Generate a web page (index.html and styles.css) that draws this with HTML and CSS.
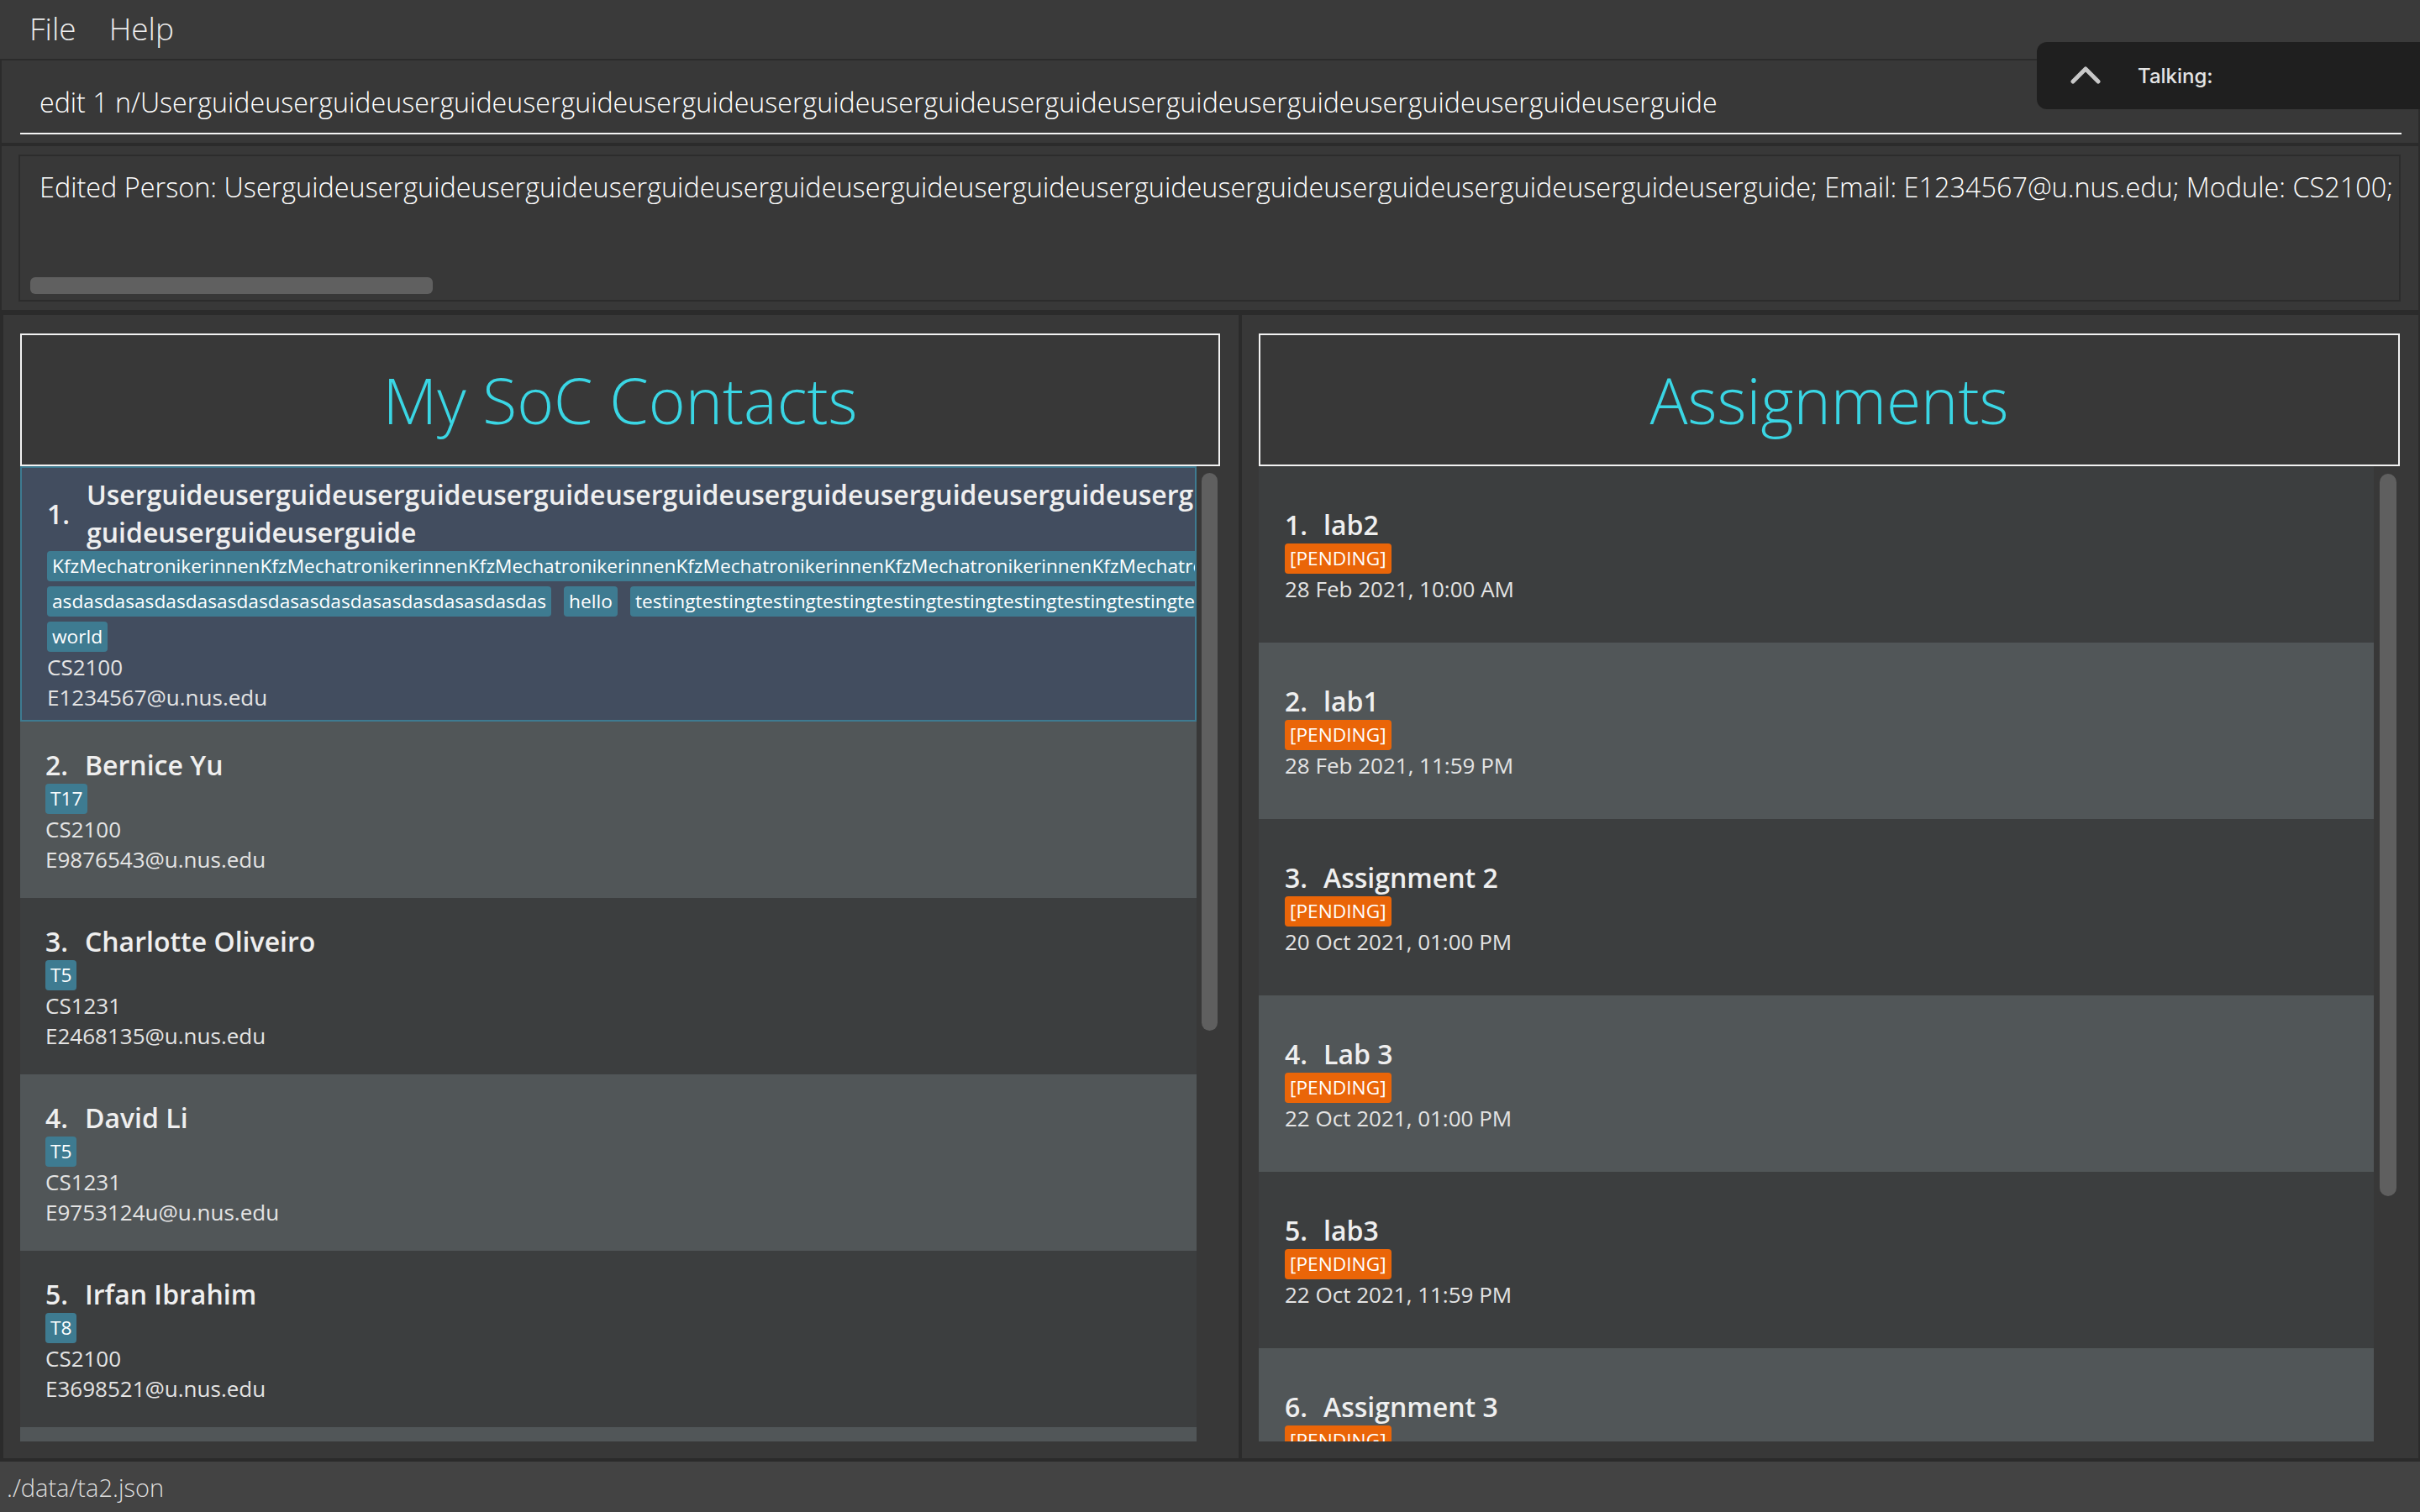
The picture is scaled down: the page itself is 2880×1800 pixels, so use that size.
FILE: index.html
```html
<!DOCTYPE html>
<html lang="en">
<head>
<meta charset="utf-8">
<title>TA2</title>
<link rel="stylesheet" href="styles.css">
</head>
<body>
<div class="app">
  <div class="menubar">
    <span class="menu-item">File</span>
    <span class="menu-item">Help</span>
  </div>

  <div class="command-panel">
    <div class="command-field">edit 1 n/Userguideuserguideuserguideuserguideuserguideuserguideuserguideuserguideuserguideuserguideuserguideuserguideuserguide</div>
  </div>

  <div class="result-panel">
    <div class="result-box">
      <div class="result-text">Edited Person: Userguideuserguideuserguideuserguideuserguideuserguideuserguideuserguideuserguideuserguideuserguideuserguideuserguide; Email: E1234567@u.nus.edu; Module: CS2100; Tags: [KfzMechatronikerinnen][hello][world]</div>
      <div class="hscroll"><div class="hthumb"></div></div>
    </div>
  </div>

  <div class="main">
    <section class="panel panel-left">
      <div class="title-box"><h1 class="title">My SoC Contacts</h1></div>
      <div class="list-wrap">
        <div class="list">
          <div class="card even selected">
            <div class="name-row">
              <span class="index">1.</span>
              <div class="name">
                <span class="name-line">Userguideuserguideuserguideuserguideuserguideuserguideuserguideuserguideuserguideuserguideuser</span>
                <span class="name-line">guideuserguideuserguide</span>
              </div>
            </div>
            <div class="tags">
              <div class="tag-row"><span class="tag">KfzMechatronikerinnenKfzMechatronikerinnenKfzMechatronikerinnenKfzMechatronikerinnenKfzMechatronikerinnenKfzMechatronikerinnenKfzMechatronikerinnen</span></div>
              <div class="tag-row"><span class="tag">asdasdasasdasdasasdasdasasdasdasasdasdasasdasdas</span><span class="tag">hello</span><span class="tag">testingtestingtestingtestingtestingtestingtestingtestingtestingtestingtestingtesting</span></div>
              <div class="tag-row"><span class="tag">world</span></div>
            </div>
            <div class="detail">CS2100</div>
            <div class="detail">E1234567@u.nus.edu</div>
          </div>

          <div class="card odd">
            <div class="name-row"><span class="index">2.</span><div class="name"><span class="name-line">Bernice Yu</span></div></div>
            <div class="tags"><div class="tag-row"><span class="tag">T17</span></div></div>
            <div class="detail">CS2100</div>
            <div class="detail">E9876543@u.nus.edu</div>
          </div>

          <div class="card even">
            <div class="name-row"><span class="index">3.</span><div class="name"><span class="name-line">Charlotte Oliveiro</span></div></div>
            <div class="tags"><div class="tag-row"><span class="tag">T5</span></div></div>
            <div class="detail">CS1231</div>
            <div class="detail">E2468135@u.nus.edu</div>
          </div>

          <div class="card odd">
            <div class="name-row"><span class="index">4.</span><div class="name"><span class="name-line">David Li</span></div></div>
            <div class="tags"><div class="tag-row"><span class="tag">T5</span></div></div>
            <div class="detail">CS1231</div>
            <div class="detail">E9753124u@u.nus.edu</div>
          </div>

          <div class="card even">
            <div class="name-row"><span class="index">5.</span><div class="name"><span class="name-line">Irfan Ibrahim</span></div></div>
            <div class="tags"><div class="tag-row"><span class="tag">T8</span></div></div>
            <div class="detail">CS2100</div>
            <div class="detail">E3698521@u.nus.edu</div>
          </div>

          <div class="card odd">
            <div class="name-row"><span class="index">6.</span><div class="name"><span class="name-line">Roy Balakrishnan</span></div></div>
            <div class="tags"><div class="tag-row"><span class="tag">T2</span></div></div>
            <div class="detail">CS2100</div>
            <div class="detail">E1357924@u.nus.edu</div>
          </div>
        </div>
        <div class="vscroll"><div class="vthumb vthumb-left"></div></div>
      </div>
    </section>

    <section class="panel panel-right">
      <div class="title-box"><h1 class="title">Assignments</h1></div>
      <div class="list-wrap">
        <div class="list">
          <div class="card acard even">
            <div class="name-row"><span class="index">1.</span><div class="name"><span class="name-line">lab2</span></div></div>
            <div class="tags"><div class="tag-row"><span class="tag status">[PENDING]</span></div></div>
            <div class="detail">28 Feb 2021, 10:00 AM</div>
          </div>
          <div class="card acard odd">
            <div class="name-row"><span class="index">2.</span><div class="name"><span class="name-line">lab1</span></div></div>
            <div class="tags"><div class="tag-row"><span class="tag status">[PENDING]</span></div></div>
            <div class="detail">28 Feb 2021, 11:59 PM</div>
          </div>
          <div class="card acard even">
            <div class="name-row"><span class="index">3.</span><div class="name"><span class="name-line">Assignment 2</span></div></div>
            <div class="tags"><div class="tag-row"><span class="tag status">[PENDING]</span></div></div>
            <div class="detail">20 Oct 2021, 01:00 PM</div>
          </div>
          <div class="card acard odd">
            <div class="name-row"><span class="index">4.</span><div class="name"><span class="name-line">Lab 3</span></div></div>
            <div class="tags"><div class="tag-row"><span class="tag status">[PENDING]</span></div></div>
            <div class="detail">22 Oct 2021, 01:00 PM</div>
          </div>
          <div class="card acard even">
            <div class="name-row"><span class="index">5.</span><div class="name"><span class="name-line">lab3</span></div></div>
            <div class="tags"><div class="tag-row"><span class="tag status">[PENDING]</span></div></div>
            <div class="detail">22 Oct 2021, 11:59 PM</div>
          </div>
          <div class="card acard odd">
            <div class="name-row"><span class="index">6.</span><div class="name"><span class="name-line">Assignment 3</span></div></div>
            <div class="tags"><div class="tag-row"><span class="tag status">[PENDING]</span></div></div>
            <div class="detail">25 Oct 2021, 11:59 PM</div>
          </div>
        </div>
        <div class="vscroll vscroll-right"><div class="vthumb vthumb-right"></div></div>
      </div>
    </section>
  </div>

  <div class="statusbar">./data/ta2.json</div>
</div>

<div class="talking">
  <svg class="chevron" width="36" height="22" viewBox="0 0 36 22" aria-hidden="true">
    <polyline points="3,19 18,4 33,19" fill="none" stroke="#c8c8c8" stroke-width="5" stroke-linecap="round" stroke-linejoin="round"/>
  </svg>
  <span class="talking-label">Talking:</span>
</div>
</body>
</html>
```

FILE: styles.css
```css
html, body {
  margin: 0;
  padding: 0;
  width: 2880px;
  height: 1800px;
  overflow: hidden;
  background: #2b2b2b;
  font-family: "Open Sans", "Liberation Sans", sans-serif;
}

.app {
  display: flex;
  flex-direction: column;
  width: 2880px;
  height: 1800px;
}

/* Menu bar */
.menubar {
  height: 70px;
  flex-shrink: 0;
  background: #3a3a3a;
  display: flex;
  align-items: center;
  padding: 0 0 3px 35px;
  box-sizing: border-box;
  gap: 39px;
}
.menu-item {
  font-size: 37px;
  font-weight: 300;
  color: #ececec;
}

/* Command box */
.command-panel {
  height: 98px;
  flex-shrink: 0;
  margin: 2px 2px 0 2px;
  background: #383838;
  box-sizing: border-box;
  padding: 27px 20px 0 22px;
}
.command-field {
  font-size: 32.2px;
  font-weight: 300;
  line-height: 46px;
  color: #ffffff;
  padding: 0 0 13px 23px;
  border-bottom: 2px solid #f4f4f4;
  white-space: nowrap;
  overflow: hidden;
}

/* Result display */
.result-panel {
  height: 195px;
  flex-shrink: 0;
  margin: 4px 2px 0 2px;
  background: #383838;
  box-sizing: border-box;
  padding: 10px 21px 10px 20px;
}
.result-box {
  height: 175px;
  box-sizing: border-box;
  border: 2px solid #2c2c2c;
  display: flex;
  flex-direction: column;
  overflow: hidden;
}
.result-text {
  font-size: 32.4px;
  font-weight: 300;
  line-height: 46px;
  color: #ffffff;
  padding: 13px 0 0 23px;
  white-space: nowrap;
  overflow: hidden;
}
.hscroll {
  margin-top: auto;
  padding: 0 0 7px 12px;
}
.hthumb {
  width: 479px;
  height: 20px;
  border-radius: 6px;
  background: #606060;
}

/* Main split */
.main {
  flex: 1;
  min-height: 0;
  margin-top: 6px;
  display: flex;
  gap: 4px;
  padding: 0 2px 0 4px;
}
.panel {
  background: #383838;
  box-sizing: border-box;
  display: flex;
  flex-direction: column;
  padding: 22px 22px 20px 20px;
  min-width: 0;
}
.panel-left {
  width: 1470px;
  flex-shrink: 0;
}
.panel-right {
  flex: 1;
}

.title-box {
  height: 158px;
  flex-shrink: 0;
  box-sizing: border-box;
  border: 2px solid #f2f2f2;
  display: flex;
  align-items: center;
  justify-content: center;
}
.title {
  margin: 0;
  font-size: 75px;
  font-weight: 300;
  color: #3ad6e4;
  line-height: 1;
}

.list-wrap {
  flex: 1;
  min-height: 0;
  display: flex;
}
.list {
  flex: 1;
  min-width: 0;
  overflow: hidden;
  display: flex;
  flex-direction: column;
}
.vscroll {
  width: 28px;
  flex-shrink: 0;
  box-sizing: border-box;
  padding-left: 6px;
}
.vscroll-right {
  width: 31px;
  padding-left: 7px;
}
.vthumb {
  width: 19px;
  border-radius: 10px;
  background: #5f5f5f;
}
.vthumb-left {
  margin-top: 8px;
  height: 664px;
}
.vthumb-right {
  width: 20px;
  margin-top: 9px;
  height: 860px;
}

/* Cards */
.card {
  flex-shrink: 0;
  min-height: 210px;
  box-sizing: border-box;
  padding: 10px 10px 10px 30px;
  display: flex;
  flex-direction: column;
  justify-content: center;
  overflow: hidden;
  color: #e6e6e6;
}
.card.even { background: #3c3e3f; }
.card.odd { background: #515658; }
.card.selected {
  background: #424d5f;
  border: 2px solid #3e7b91;
  padding: 9px 10px 9px 30px;
}
.acard { padding-left: 31px; }

.name-row {
  display: flex;
  align-items: center;
  min-width: 0;
}
.index {
  width: 47px;
  flex-shrink: 0;
  font-size: 32px;
  font-weight: 600;
  line-height: 45px;
  color: #efefef;
}
.acard .index { width: 46px; }
.name {
  display: flex;
  flex-direction: column;
  min-width: 0;
}
.name-line {
  font-size: 32px;
  font-weight: 600;
  line-height: 45px;
  color: #efefef;
  white-space: nowrap;
}

.tags {
  display: flex;
  flex-direction: column;
  gap: 6px;
}
.tag-row {
  display: flex;
  gap: 15px;
  white-space: nowrap;
}
.tag {
  flex-shrink: 0;
  height: 36px;
  line-height: 36px;
  padding: 0 6px;
  border-radius: 4px;
  background: #3e7b91;
  color: #ffffff;
  font-size: 22.7px;
}
.tag.status {
  background: #ea6508;
}

.detail {
  font-size: 26px;
  line-height: 36px;
  color: #e4e4e4;
  white-space: nowrap;
}

/* Status bar */
.statusbar {
  height: 60px;
  flex-shrink: 0;
  margin-top: 4px;
  background: #434343;
  display: flex;
  align-items: center;
  padding-left: 8px;
  font-size: 29px;
  font-weight: 300;
  color: #dedede;
}

/* macOS overlay */
.talking {
  position: absolute;
  left: 2424px;
  top: 50px;
  width: 480px;
  height: 80px;
  box-sizing: border-box;
  background: #1f1f1f;
  border-radius: 12px;
  display: flex;
  align-items: center;
  padding-left: 40px;
  gap: 44px;
}
.chevron {
  display: block;
  margin-top: -2px;
}
.talking-label {
  font-family: Inter, "Noto Sans", sans-serif;
  font-size: 24px;
  font-weight: 500;
  color: #e4e4e4;
}
```
